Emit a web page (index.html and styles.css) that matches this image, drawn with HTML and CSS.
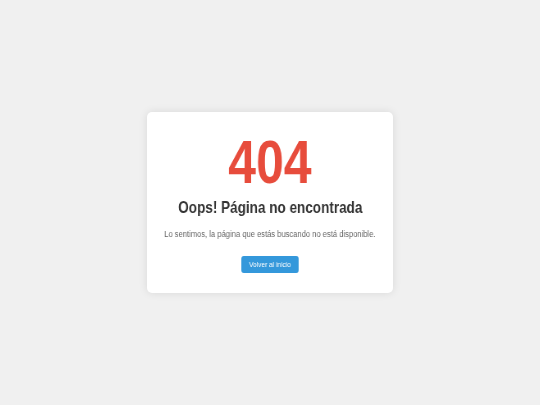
FILE: index.html
```html
<!DOCTYPE html>
<html lang="es">
<head>
  <meta charset="UTF-8" />
  <title>404 – Página no encontrada</title>
  <link rel="stylesheet" href="styles.css">
</head>
<body>

  <main class="error-box">
    <h1 class="error-code">404</h1>
    <h2 class="error-title">Oops! Página no encontrada</h2>
    <p class="error-text">Lo sentimos, la página que estás buscando no está disponible.</p>
    <a class="btn-home" href="#">Volver al inicio</a>
  </main>

</body>
</html>
```

FILE: styles.css
```css
body {
  font-family: 'Liberation Sans', Arial, sans-serif;
  background: #f0f0f0;
  margin: 0;
  padding: 0;
  height: 100vh;
  display: flex;
  align-items: center;
  justify-content: center;
}

.error-box {
  width: 246px;
  box-sizing: border-box;
  padding: 20px 10px 20px;
  display: flex;
  flex-direction: column;
  align-items: center;
  background: white;
  border-radius: 5px;
  box-shadow: 0 0 8px rgba(0,0,0,0.1);
}

/* condensed lettering, no narrow face installed */
.error-box > * {
  transform: scaleX(0.82);
  will-change: transform;
  white-space: nowrap;
}

.error-code {
  font-size: 61px;
  line-height: 61px;
  margin: 0;
  color: #e74c3c;
}

.error-title {
  font-size: 16.5px;
  line-height: 20px;
  margin: 4px 0 0;
  color: #333;
}

.error-text {
  font-size: 9.25px;
  line-height: 12px;
  color: #666;
  margin: 11px 0 0;
}

.btn-home {
  margin-top: 16px;
  padding: 3px 9.4px;
  font-size: 8px;
  line-height: 11px;
  color: white;
  background: #3498db;
  border-radius: 3px;
  text-decoration: none;
}
```
